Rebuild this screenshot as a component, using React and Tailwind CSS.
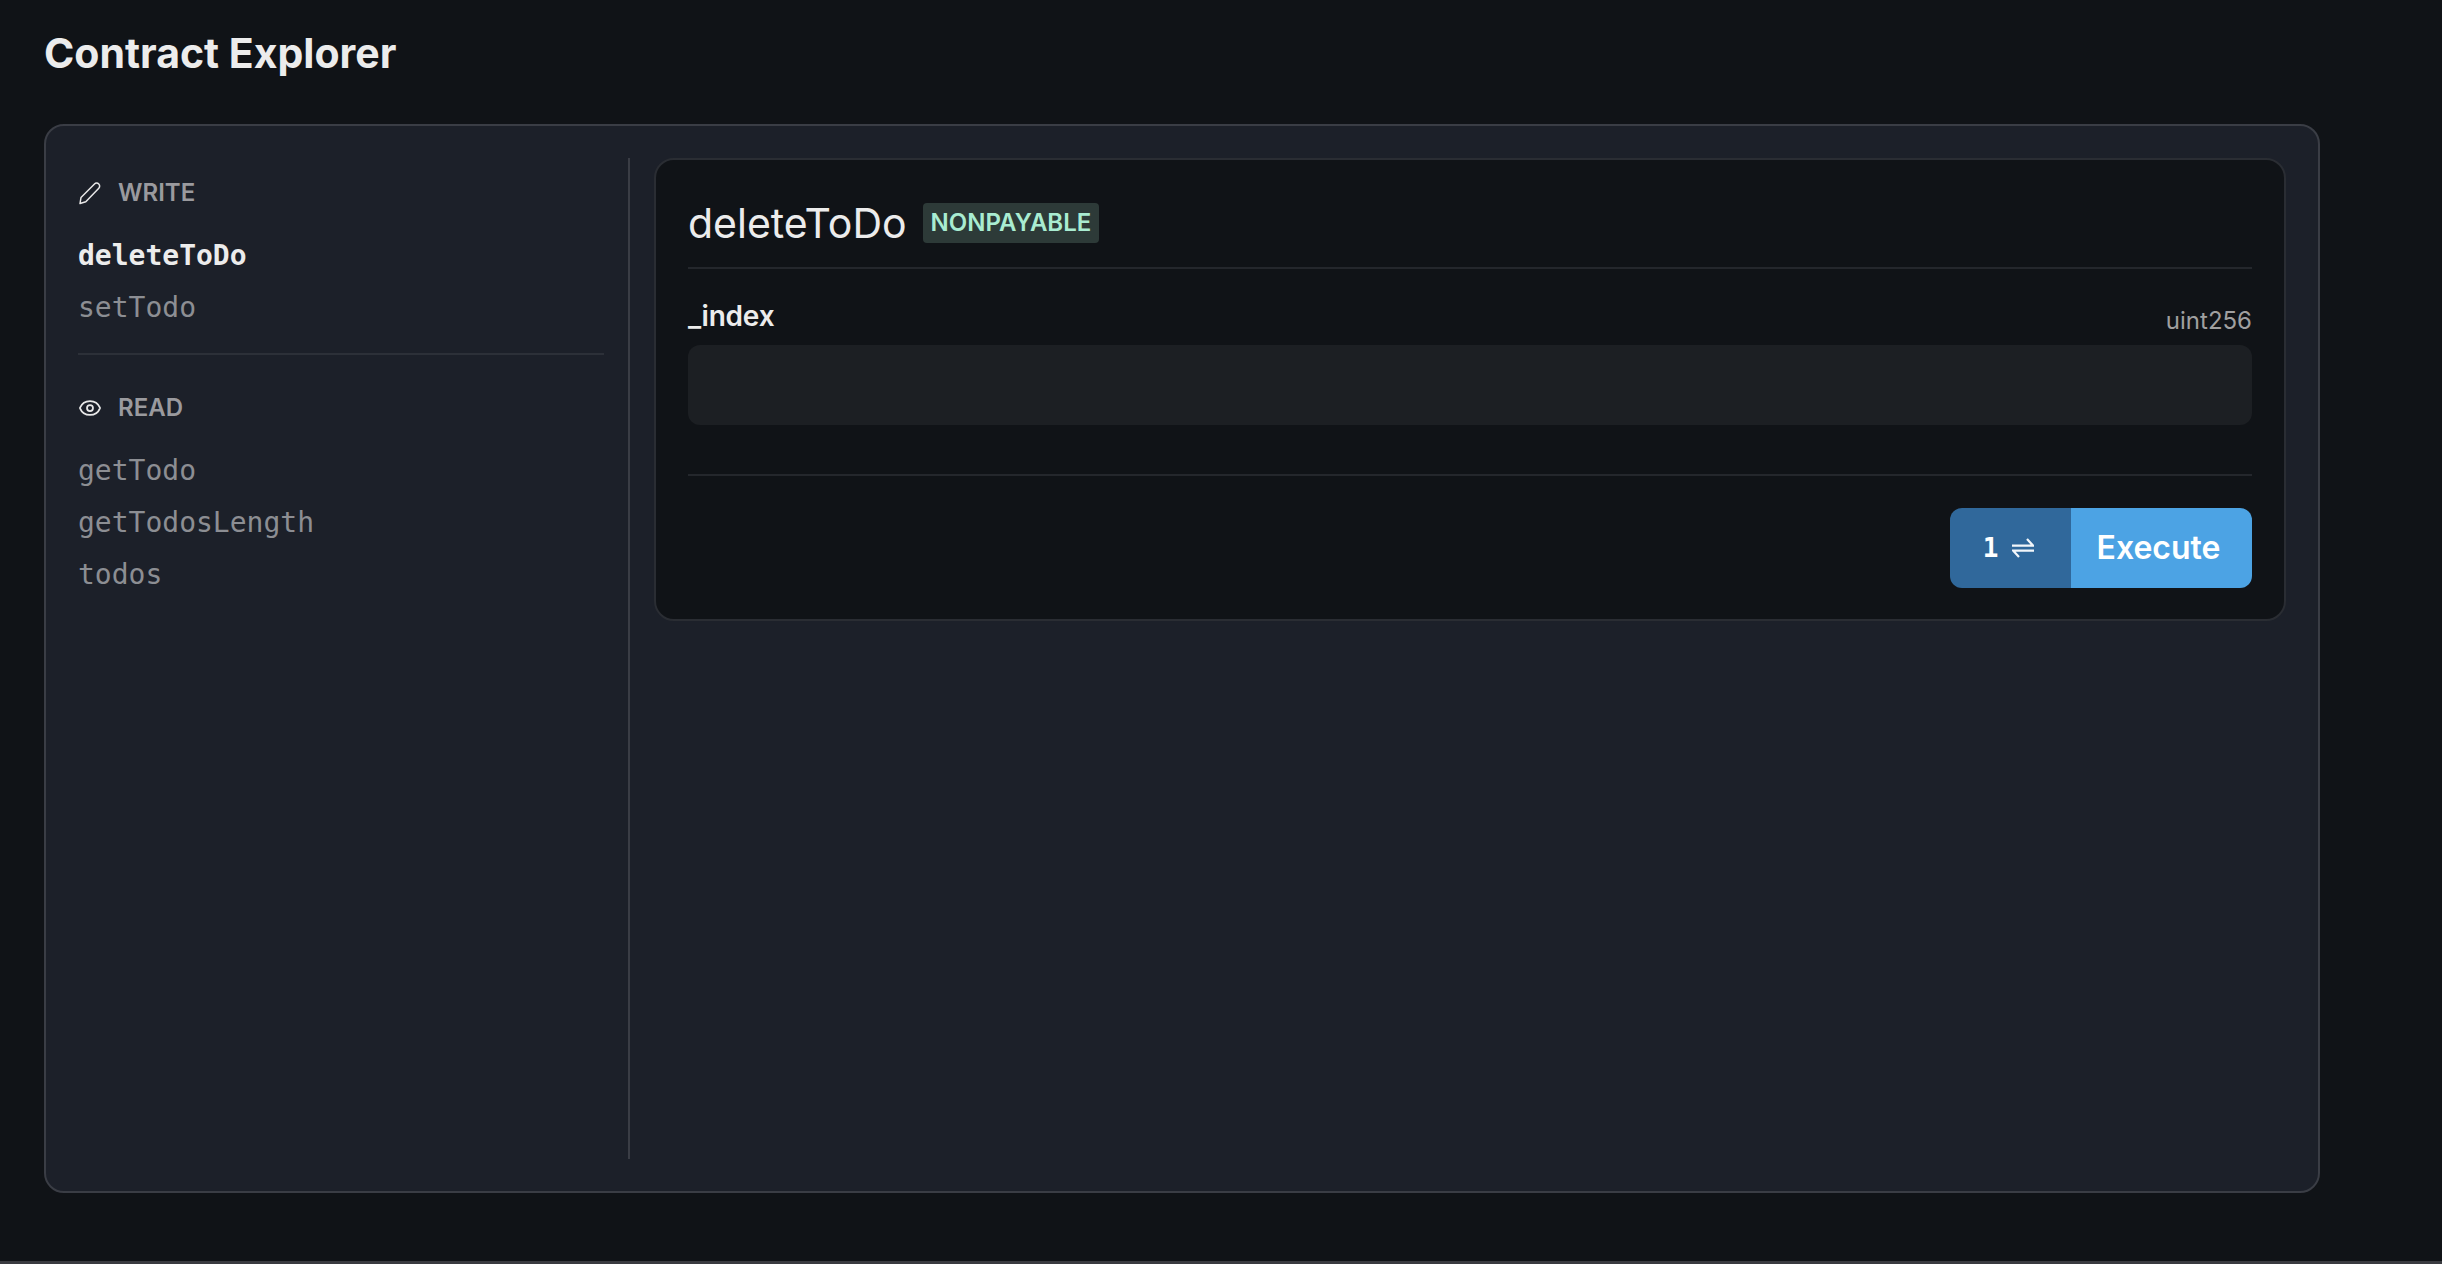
import React from 'react';
import { Eye } from 'lucide-react';

const mono = 'font-["DejaVu_Sans_Mono",monospace]';

const PencilIcon = () => (
  <svg width="24" height="24" viewBox="0 0 24 24" fill="none" stroke="#e8e8e8" strokeWidth="1.5" strokeLinejoin="round">
    <path d="M2 22.5l1-6L16.5 3a2.9 2.9 0 0 1 4.3 4.2L7.8 20.8z" />
  </svg>
);

const SwapIcon = () => (
  <svg width="22" height="20" viewBox="0 0 22 20" fill="none" stroke="#f2f6fa" strokeWidth="2.25">
    <path d="M0 7.5h21L15 1" />
    <path d="M22 12.5H1L7 19" />
  </svg>
);

const SectionHeading = ({ icon, label }) => (
  <div className="flex items-center gap-4 h-9">
    {icon}
    <span className="text-2xl leading-9 font-semibold text-[#9a9a9e]">{label}</span>
  </div>
);

const MethodItem = ({ name, active }) => (
  <div className={`h-[52px] leading-[52px] text-[28px] ${mono} ${active ? 'font-bold text-[#ececec]' : 'font-normal text-[#8c8e93]'}`}>
    {name}
  </div>
);

export default function App() {
  return (
    <div className='min-h-screen h-[1264px] flex flex-col bg-[#101317] font-["Inter",sans-serif] text-[#ececec]'>
      <div className="flex-1 pl-[44px] pt-[27px]">
        <h1 className="text-[41px] leading-[52px] font-bold">Contract Explorer</h1>

        <div className="mt-[45px] w-[2276px] h-[1069px] flex p-8 rounded-[20px] border-2 border-[#3a3d45] bg-[#1c2029]">
          {/* Method list */}
          <div className="w-[552px] pr-6 border-r-2 border-[#3a3d45] pt-[17px]">
            <SectionHeading icon={<PencilIcon />} label="WRITE" />
            <div className="mt-[19px]">
              <MethodItem name="deleteToDo" active />
              <MethodItem name="setTodo" />
            </div>
            <div className="mt-[19px] border-t-2 border-[#2c3038]" />
            <div className="mt-[35px]">
              <SectionHeading icon={<Eye size={24} color="#e8e8e8" strokeWidth={1.75} />} label="READ" />
            </div>
            <div className="mt-[19px]">
              <MethodItem name="getTodo" />
              <MethodItem name="getTodosLength" />
              <MethodItem name="todos" />
            </div>
          </div>

          {/* Selected method */}
          <div className="ml-6 flex-1 self-start h-[463px] px-8 pt-[31px] rounded-[20px] border-2 border-[#2a2d33] bg-[#101317]">
            <div className="flex items-center gap-4 h-[78px] border-b-2 border-[#24272c] pb-3">
              <span className="text-[41px] leading-[48px]">deleteToDo</span>
              <span className="h-10 flex items-center px-2 rounded text-2xl font-semibold text-[#a9ecd1] bg-[#2d3a38]">NONPAYABLE</span>
            </div>

            <div className="flex items-end justify-between mt-6 h-[52px] pb-2">
              <span className="mb-[3px] text-[28px] leading-9 font-semibold tracking-[-0.2px]">_index</span>
              <span className="text-2xl leading-8 text-[#a0a0a0]">uint256</span>
            </div>
            <div className="h-20 rounded-xl bg-[#1c1f23]" />

            <div className="mt-[49px] border-t-2 border-[#24272c]" />

            <div className="flex justify-end mt-8">
              <div className="flex h-20 rounded-xl overflow-hidden">
                <div className="w-[121px] flex items-center justify-center gap-[14px] pr-1 bg-[#30689b] text-white font-semibold">
                  <span className={`text-[26px] ${mono}`}>1</span>
                  <SwapIcon />
                </div>
                <button className="w-[181px] pr-[6px] bg-[#4ca3e4] text-white text-[32px] font-semibold">Execute</button>
              </div>
            </div>
          </div>
        </div>
      </div>
      <div className="h-[3px] bg-[#3a3b40]" />
    </div>
  );
}
